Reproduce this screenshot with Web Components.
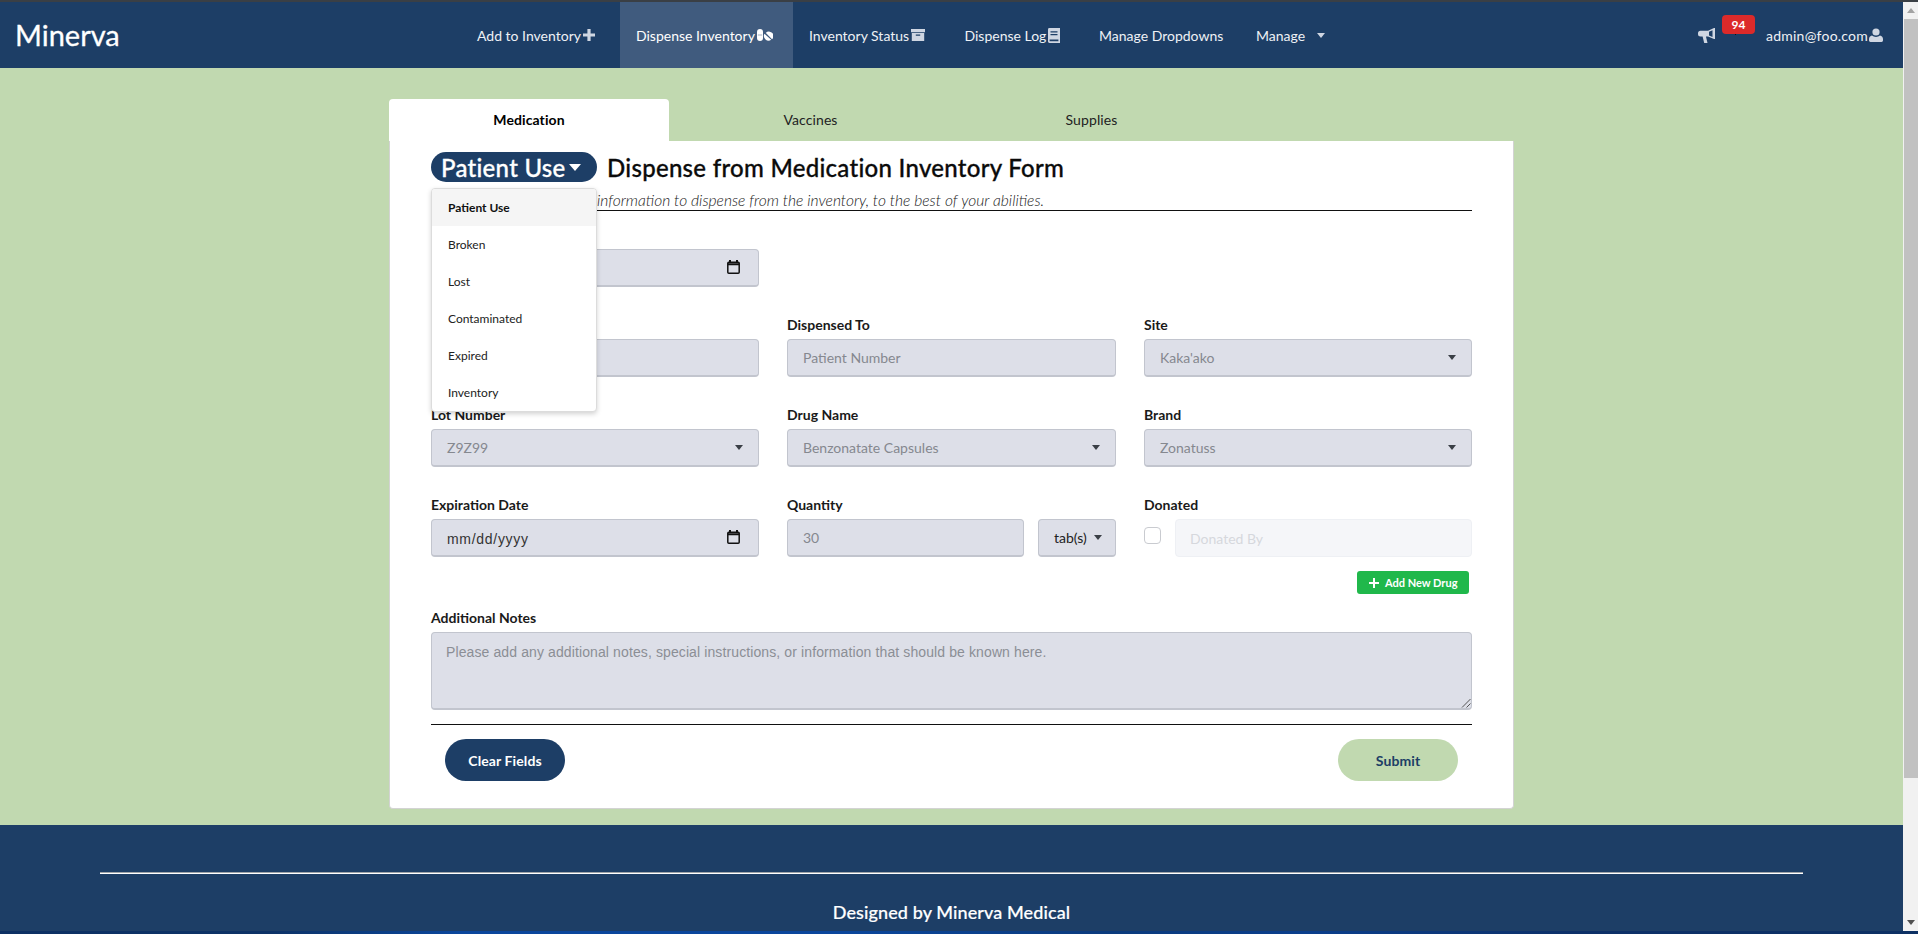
<!DOCTYPE html>
<html lang="en">
<head>
<meta charset="utf-8">
<title>Minerva</title>
<style>
html,body{margin:0;padding:0;height:100%;overflow:hidden;background:#1d3e66}
body{font-family:Lato,"Noto Sans",sans-serif;font-size:14px}
</style>
</head>
<body>
<mv-app>
  <mv-nav slot="nav"></mv-nav>
  <mv-card slot="main">
    <mv-tabs slot="tabs"></mv-tabs>
    <mv-form slot="body"></mv-form>
  </mv-card>
  <mv-footer slot="footer"></mv-footer>
</mv-app>

<script>
const ICONS = {
  plus:`<svg viewBox="0 0 12 12" width="12" height="12"><path d="M4.4 0h3.2v4.4H12v3.2H7.6V12H4.4V7.6H0V4.4h4.4z"/></svg>`,
  pills:`<svg viewBox="0 0 16 12" width="16" height="12"><path fill-rule="evenodd" d="M3 0a3 3 0 0 1 3 3v6a3 3 0 0 1-6 0V3a3 3 0 0 1 3-3zM.8 5.700v.6h4.400v-.6z"/><path d="M10 1.400a4.700 4.700 0 0 1 5 1.200l-.2.2-5.900 5.900-.2.2a4.700 4.700 0 0 1 1.300-7.500zM15.600 3.400a4.700 4.700 0 0 1-6 6.800z" transform="translate(.3 .9) rotate(90 11.500 5.800)"/></svg>`,
  box:`<svg viewBox="0 0 14 12" width="14" height="12"><path fill-rule="evenodd" d="M0 0h14v3.200H0zM.8 4h12.400v8H.8zM4.800 5.400v1.400h4.400V5.400z"/></svg>`,
  book:`<svg viewBox="0 0 12 15" width="12" height="15"><path fill-rule="evenodd" d="M1.400 0H12v15H1.400A1.400 1.400 0 0 1 0 13.600V1.400A1.400 1.400 0 0 1 1.400 0zM2.500 3.200v1.200h7V3.200zM2.500 6v1.200h7V6zM1.600 11.500v1.800h8.800v-1.800z"/></svg>`,
  bull:`<svg viewBox="0 0 17 15" width="17" height="15"><path fill-rule="evenodd" d="M16 0h1v11h-1L10 8.600H8v.1L9.500 15H6.200L4.600 8.600H2.500A2.500 2.500 0 0 1 0 6.100V5.300a2.500 2.500 0 0 1 2.500-2.500H10zM14.500 2.300L11 3.800v3.800l3.500 1.500z"/></svg>`,
  user:`<svg viewBox="0 0 14 14" width="14" height="14"><circle cx="7" cy="4" r="3.600"/><path d="M3 7.600c1 .9 2.500 1.300 4 1.300s3-.4 4-1.300c1.800.3 3 1.700 3 3.400v1.600a1.400 1.400 0 0 1-1.400 1.400H1.400A1.400 1.400 0 0 1 0 12.600V11c0-1.700 1.200-3.100 3-3.400z"/></svg>`
};
const CAL = `<svg viewBox="0 0 13 14" width="13" height="14" fill="none" stroke="#111" stroke-width="1.500"><rect x=".8" y="2.200" width="11.400" height="11" rx="1"/><path d="M.8 4.300h11.400M3 0v2.500M10 0v2.500" stroke-width="2"/></svg>`;

function define(name, html){
  customElements.define(name, class extends HTMLElement{
    constructor(){
      super();
      const root = this.attachShadow({mode:'open'});
      root.innerHTML = typeof html === 'function' ? html(this) : html;
    }
  });
}

define('mv-app', `<style>
:host{display:flex;flex-direction:column;width:1918px;height:934px;overflow:hidden}
.top{height:2px;background:#3a3f45;flex:none}
.mid{flex:1;display:flex;min-height:0}
.page{flex:1;min-width:0;display:flex;flex-direction:column}
main{flex:none;height:757px;background:#c1d9b0;display:flex;justify-content:center;box-sizing:border-box;padding-top:31px}
.task{height:3px;flex:none;background:linear-gradient(90deg,#0d3063 0,#0d3266 14%,#0a469c 24%,#0a469c 44%,#0b3a7c 58%,#0b3e8c 68%,#0d3068 82%,#0d3063 100%)}
</style>
<div class="top"></div>
<div class="mid">
  <div class="page">
    <slot name="nav"></slot>
    <main><slot name="main"></slot></main>
    <slot name="footer"></slot>
  </div>
  <mv-scrollbar></mv-scrollbar>
</div>
<div class="task"></div>`);

define('mv-scrollbar', `<style>
:host{display:flex;flex-direction:column;width:15px;flex:none;background:#f1f1f1}
.btn{height:17px;display:flex;align-items:center;justify-content:center;flex:none}
.thumb{height:759px;background:#c1c1c1;flex:none;margin-left:1px}
.sp{flex:1}
.up{width:0;height:0;border:4px solid transparent;border-top:0;border-bottom:5px solid #a3a3a3}
.dn{width:0;height:0;border:4px solid transparent;border-bottom:0;border-top:5px solid #505050}
</style>
<div class="btn"><i class="up"></i></div>
<div class="thumb"></div>
<div class="sp"></div>
<div class="btn"><i class="dn"></i></div>`);

define('mv-link', (el)=>`<style>
:host{display:flex;align-items:center;height:66px;box-sizing:border-box;flex:none;padding-left:16px;color:#eef1f5;font-size:14px;white-space:nowrap}
:host([active]){background:#405b7e;color:#fff}
svg{fill:#cfd6e2;display:block;margin-left:2px;flex:none}
:host([active]) svg{fill:#fff}
.caret{width:0;height:0;border:4.500px solid transparent;border-bottom:0;border-top:5px solid #cfd6e2;margin-left:12px}
</style><slot></slot>${el.getAttribute('icon')?ICONS[el.getAttribute('icon')]:''}${el.hasAttribute('caret')?'<i class="caret"></i>':''}`);

define('mv-nav', `<style>
:host{display:flex;align-items:center;height:66px;background:#1d3e66;flex:none;color:#fff}
.brand{font-size:29px;margin-left:15px;width:446px;flex:none;line-height:66px;-webkit-text-stroke:.3px #fff}
.right{margin-left:auto;display:flex;align-items:center;position:relative;color:#eef1f5}
.bull{fill:#cfd6e2;display:block;margin-top:3px}
.badge{position:absolute;left:24px;top:-10px;width:33px;height:19px;background:#dc2a2a;color:#fff;border-radius:4px;font-size:12px;font-weight:700;line-height:19px;text-align:center}
.badge::after{content:"";position:absolute;left:13px;top:19px;width:1px;height:1px;background:#111}
.who{margin-left:51px;margin-right:20px;display:flex;align-items:center;font-size:14px;letter-spacing:.22px}
.who svg{fill:#cfd6e2;display:block;margin-left:1px}
</style>
<div class="brand">Minerva</div>
<mv-link icon="plus" style="width:159px">Add to Inventory</mv-link>
<mv-link icon="pills" active style="width:173px">Dispense Inventory</mv-link>
<mv-link icon="box" style="width:155.500px">Inventory Status</mv-link>
<mv-link icon="book" style="width:134.500px">Dispense Log</mv-link>
<mv-link style="width:157px">Manage Dropdowns</mv-link>
<mv-link caret>Manage</mv-link>
<div class="right">
  <span class="bull">${ICONS.bull}</span>
  <span class="badge">94</span>
  <span class="who">admin@foo.com${ICONS.user}</span>
</div>`);

define('mv-card', `<style>
:host{display:block;width:1125px;flex:none;color:#111}
.body{background:#fff;border:1px solid #d3d3d3;border-top:0;border-radius:0 0 4px 4px;height:668px;box-sizing:border-box;padding:11px 41px 0}
</style>
<slot name="tabs"></slot>
<div class="body"><slot name="body"></slot></div>`);

define('mv-tabs', `<style>
:host{display:flex;height:42px;font-size:14px;color:#222}
div{width:281px;display:flex;align-items:center;justify-content:center;letter-spacing:.1px;box-sizing:border-box;padding-bottom:2px}
.on{width:280px;margin-right:1px;background:#fff;color:#000;border-radius:4px 4px 0 0;font-weight:700}
</style>
<div class="on">Medication</div><div>Vaccines</div><div>Supplies</div>`);

define('mv-field', (el)=>`<style>
:host{display:flex;flex-direction:column;min-width:0;width:100%}
label{display:block;font-size:14px;font-weight:700;line-height:18px;height:23px;color:#1a1a1a}
</style><label>${el.getAttribute('label')||''}</label><slot></slot>`);

define('mv-input', (el)=>`<style>
:host{display:flex;align-items:center;height:38px;box-sizing:border-box;background:#dddfe8;border:1px solid #c2c5ce;border-bottom-width:2px;border-radius:4px;padding:0 15px;font-size:14px;color:#85888f;flex:1 1 auto;min-width:0;white-space:nowrap}
:host([dark]){color:#222}
:host([faint]){background:#f5f6f9;border:1px solid #eef0f4;color:#d6d8dd;padding-left:14px}
:host([sys]){font-family:"Liberation Sans",Arial,sans-serif;color:#333;letter-spacing:.7px;padding-top:2px}
.c{width:0;height:0;border:4px solid transparent;border-bottom:0;border-top:5px solid #3a3f46;margin-left:auto;flex:none}
:host([dark]) .c{margin-left:7px}
.cal{display:block;margin-left:auto;margin-right:3px;margin-top:-1px;height:14px}
:host([sys]) .cal{margin-top:-3px}
</style><slot></slot>${el.hasAttribute('select')?'<i class="c"></i>':''}${el.hasAttribute('cal')?`<span class="cal">${CAL}</span>`:''}`);

define('mv-pill', `<style>
:host{display:inline-flex;align-items:center;justify-content:center;width:120px;height:42px;border-radius:21px;font-size:14px;font-weight:700;letter-spacing:.1px;background:var(--bg);color:var(--fg)}
</style><slot></slot>`);

define('mv-menu', `<style>
:host{position:absolute;left:0;top:36px;width:166px;box-sizing:border-box;background:#fff;border:1px solid #dcdcdc;border-radius:4px;box-shadow:0 2px 5px rgba(0,0,0,.18);display:block;font-size:12px;color:#222;overflow:hidden}
div{height:37px;display:flex;align-items:center;padding-left:16px}
.on{background:#f5f5f5;font-weight:700;color:#111}
</style><div class="on">Patient Use</div><div>Broken</div><div>Lost</div><div>Contaminated</div><div>Expired</div><div>Inventory</div>`);

define('mv-form', `<style>
:host{display:block;position:relative;color:#111}
.head{display:flex;align-items:center;height:30px;font-size:24px;font-weight:500;letter-spacing:.28px;color:#0b0b0b;-webkit-text-stroke:.3px currentColor}
.pill{display:flex;align-items:center;width:166px;height:30px;box-sizing:border-box;padding-left:10px;background:#1d3e66;color:#fff;border-radius:15px;flex:none;margin-right:10px;white-space:nowrap}
.pill i{width:0;height:0;border:6.500px solid transparent;border-bottom:0;border-top:7px solid #fff;margin-left:3px}
.sub{height:29px;box-sizing:border-box;padding-left:166px;font-style:italic;font-weight:300;font-size:15.600px;line-height:37px;color:#222;border-bottom:1px solid #111;white-space:nowrap}
.grid{display:grid;grid-template-columns:328px 329px 328px;column-gap:28px;row-gap:29px;margin-top:15px}
.wide{display:flex;gap:14px}
.don{display:flex;align-items:center;gap:14px}
.cb{width:17px;height:17px;box-sizing:border-box;background:#fff;border:1px solid #c9cbd0;border-radius:4px;flex:none;margin-top:-5px}
.add{display:flex;justify-content:flex-end;height:0;padding-right:3px}
.addb{display:inline-flex;align-items:center;height:23px;margin-top:14px;width:112px;box-sizing:border-box;padding-left:12px;background:#20b84b;border-radius:3px;color:#fff;font-size:11px;font-weight:700;white-space:nowrap;flex:none}
.addb svg{fill:#fff;margin-right:6px;display:block}
.notes{margin-top:52px}
.ta{display:block;height:78px;box-sizing:border-box;background:#dddfe8;border:1px solid #c2c5ce;border-bottom-width:2px;border-radius:4px;padding:9px 14px;font:14px/20px "Liberation Sans",Arial,sans-serif;letter-spacing:.11px;color:#8b8e95;position:relative}
.ta svg{position:absolute;right:0;bottom:0}
hr{margin:14px 0 0;border:0;border-top:1px solid #111;height:0}
.acts{display:flex;justify-content:space-between;padding:14px 14px 0}
</style>
<div class="head">
  <div class="pill">Patient Use<i></i></div>
  <span>Dispense from Medication Inventory Form</span>
</div>
<mv-menu></mv-menu>
<div class="sub">information to dispense from the inventory, to the best of your abilities.</div>
<div class="grid">
  <mv-field><mv-input cal></mv-input></mv-field>
  <div></div><div></div>
  <mv-field><mv-input></mv-input></mv-field>
  <mv-field label="Dispensed To"><mv-input>Patient Number</mv-input></mv-field>
  <mv-field label="Site"><mv-input select>Kaka'ako</mv-input></mv-field>
  <mv-field label="Lot Number"><mv-input select>Z9Z99</mv-input></mv-field>
  <mv-field label="Drug Name"><mv-input select>Benzonatate Capsules</mv-input></mv-field>
  <mv-field label="Brand"><mv-input select>Zonatuss</mv-input></mv-field>
  <mv-field label="Expiration Date"><mv-input sys cal>mm/dd/yyyy</mv-input></mv-field>
  <mv-field label="Quantity"><div class="wide"><mv-input>30</mv-input><mv-input dark select style="flex:0 0 78px">tab(s)</mv-input></div></mv-field>
  <mv-field label="Donated"><div class="don"><span class="cb"></span><mv-input faint>Donated By</mv-input></div>
    <div class="add"><span class="addb"><svg viewBox="0 0 10 10" width="10" height="10"><path d="M4 0h2v4h4v2H6v4H4V6H0V4h4z"/></svg>Add New Drug</span></div>
  </mv-field>
</div>
<div class="notes">
  <mv-field label="Additional Notes"><div class="ta">Please add any additional notes, special instructions, or information that should be known here.<svg width="10" height="10" viewBox="0 0 10 10" fill="none" stroke="#555" stroke-width="1"><path d="M1 9.500L9.500 1M5.500 9.500L9.500 5.500"/></svg></div></mv-field>
</div>
<hr>
<div class="acts">
  <mv-pill style="--bg:#1d3e66;--fg:#fff">Clear Fields</mv-pill>
  <mv-pill style="--bg:#c1d9b0;--fg:#1d3e66">Submit</mv-pill>
</div>`);

define('mv-footer', `<style>
:host{display:flex;flex-direction:column;align-items:center;height:106px;flex:none;background:#1d3e66;color:#fff}
.rule{width:1703px;height:2px;margin-top:47px;background:linear-gradient(#9ea3a8 50%,#fff 50%);flex:none}
p{margin:26px 0 0;font-size:18px;font-weight:500;line-height:24px;letter-spacing:.1px;-webkit-text-stroke:.2px #fff}
</style><div class="rule"></div><p>Designed by Minerva Medical</p>`);
</script>
</body>
</html>
